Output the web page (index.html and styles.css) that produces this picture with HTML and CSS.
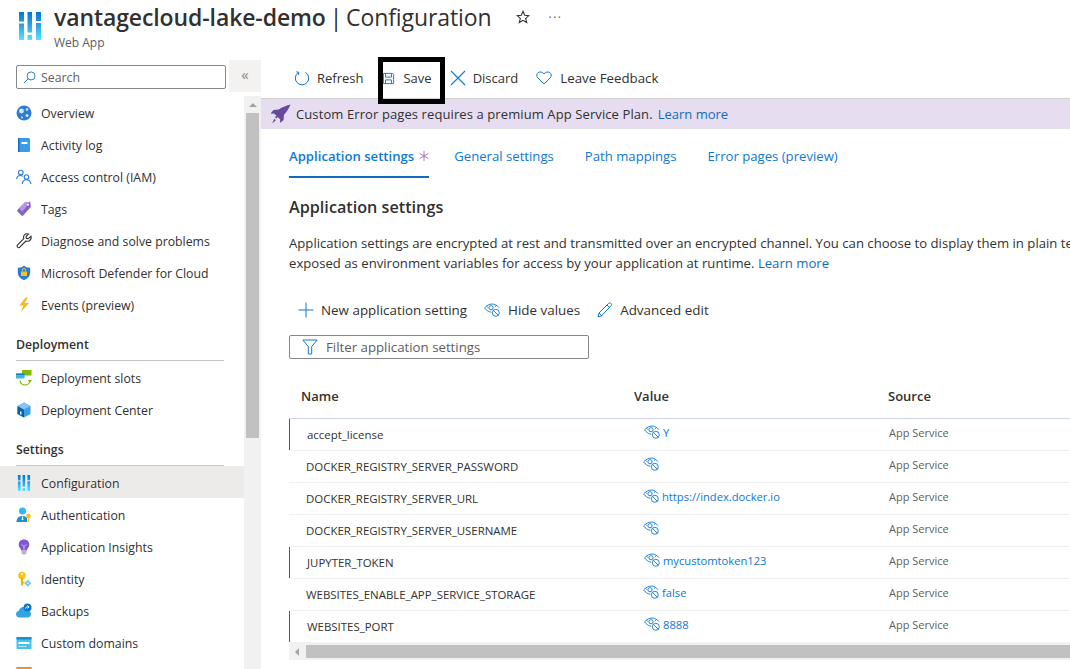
FILE: index.html
```html
<!DOCTYPE html>
<html>
<head>
  <meta http-equiv="Content-Type" content="text/html; charset=utf-8" />
  <title>vantagecloud-lake-demo | Configuration</title>
<link rel="stylesheet" href="styles.css">
</head>
<body>

<svg class="defs" width="0" height="0">
  <symbol id="sliders" viewBox="0 0 22 28">
    <defs>
      <linearGradient id="barfill" x1="0" y1="0" x2="0" y2="1">
        <stop offset="0" stop-color="#0078d4"/>
        <stop offset="0.45" stop-color="#2aa0e0"/>
        <stop offset="1" stop-color="#50e6ff"/>
      </linearGradient>
    </defs>
    <path fill="url(#barfill)" d="M0 0h5v9.500H0zM0 11.500h5V28H0zM8.500 0H13v20.500H8.500zM8.500 23H13v5H8.500zM17 0h5v9H17zM17 11h5v17h-5z"/>
  </symbol>
  <symbol id="eye" viewBox="0 0 16 14">
    <path fill="none" stroke="#0f78d4" stroke-width=".9" d="M.5 5C3 2.400 5.500 1 8 1s5 1.100 7 3.700M.5 5c2 2.500 4.300 3.900 6.800 4.200M2.800 3.300l1 1.300M12.200 2.400l-.8 1.300"/>
    <circle cx="7" cy="4.700" r="2.100" fill="none" stroke="#0f78d4" stroke-width=".9"/>
    <circle cx="11.800" cy="9.800" r="3.500" fill="#fff" stroke="#0f78d4" stroke-width=".9"/>
    <path stroke="#0f78d4" stroke-width=".9" d="M9.400 7.400l4.800 4.800"/>
  </symbol>
</svg>

<div class="page">

  <header class="blade-head">
    <svg class="logo"><use href="#sliders"/></svg>
    <div class="blade-titles">
      <div class="title-row">
        <h1 class="blade-title"><b>vantagecloud-lake-demo</b> | Configuration</h1>
        <svg class="star" viewBox="0 0 14 14"><path fill="none" stroke="#323130" stroke-width="1.100" d="M7 1.300l1.700 3.900 4.200.4-3.200 2.800 1 4.100L7 10.300l-3.700 2.200 1-4.100-3.200-2.800 4.200-.4z"/></svg>
        <span class="more">···</span>
      </div>
      <div class="blade-sub">Web App</div>
    </div>
  </header>

  <div class="blade-body">

    <aside class="sidebar">
      <div class="side-top">
        <div class="search">
          <svg class="search-ico" viewBox="0 0 14 14"><circle cx="8.700" cy="5.300" r="4.300" fill="none" stroke="#0f78d4"/><path stroke="#0f78d4" d="M5.500 8.500L1 13"/></svg>
          <span>Search</span>
        </div>
        <div class="collapse">«</div>
      </div>
      <div class="side-main">
        <nav class="nav">
          <a class="nav-item">
            <svg viewBox="0 0 16 16"><circle cx="8" cy="8" r="7.500" fill="#2b7cd3"/><circle cx="5.500" cy="6" r="2.400" fill="#cfe6f8"/><circle cx="11" cy="4.500" r="1.300" fill="#cfe6f8"/><circle cx="11" cy="10.500" r="1.500" fill="#cfe6f8"/><circle cx="6" cy="12.500" r="1" fill="#cfe6f8"/></svg>
            Overview</a>
          <a class="nav-item">
            <svg viewBox="0 0 16 16"><rect x="2" y="1" width="12" height="14" rx="1.500" fill="#3a9be6"/><rect x="2" y="1" width="1.500" height="14" fill="#1a6bb5"/><rect x="5.500" y="5" width="6" height="2" fill="#fff"/></svg>
            Activity log</a>
          <a class="nav-item">
            <svg viewBox="0 0 16 16" fill="none" stroke="#2b7cd3" stroke-width="1.100"><circle cx="4.800" cy="3.500" r="2.300"/><path d="M.6 10c.3-2.300 1.800-3.500 3.700-3.500 1 0 1.800.3 2.400.8"/><circle cx="10.500" cy="8" r="2.300"/><path d="M6.200 15c.2-2.700 2-4.300 4.300-4.300s4.100 1.600 4.400 4.300"/></svg>
            Access control (IAM)</a>
          <a class="nav-item">
            <svg viewBox="0 0 16 16"><path fill="#8661c5" d="M9 1.200l5.300-.4.500 5.300-7.600 8.300a1.200 1.200 0 0 1-1.700.1L1.500 10.400a1.200 1.200 0 0 1 0-1.700z"/><path fill="#b796e6" d="M9 1.200l5.300-.4-8 9.700-3-2.700z"/><circle cx="12" cy="3.700" r="1" fill="#fff"/></svg>
            Tags</a>
          <a class="nav-item">
            <svg viewBox="0 0 16 16"><path fill="none" stroke="#323130" stroke-width="1.100" d="M15 3.200l-2.700 2.500-1.900-.3-.4-1.900L12.600 1C10.500.2 8 1.200 7.600 3.500c-.1.800 0 1.500.2 2.100l-6.200 6.300c-.7.800-.6 1.600 0 2.300.6.600 1.500.7 2.200 0l6.100-6.200c.8.300 1.700.4 2.500.2 2-.5 3.200-2.700 2.600-5z"/></svg>
            Diagnose and solve problems</a>
          <a class="nav-item">
            <svg viewBox="0 0 16 16"><path fill="#2b7cd3" d="M8 .8c1.500 1.300 3.500 2 5.700 2 .3 0 .5.200.5.500v4.200c0 3.500-2.600 6.300-6.200 7.700-3.600-1.400-6.200-4.200-6.200-7.700V3.300c0-.3.200-.5.500-.5C4.500 2.800 6.500 2.100 8 .8z"/><rect x="5" y="6.500" width="6" height="4.500" rx=".5" fill="#f5c518"/><path fill="none" stroke="#f5c518" d="M6.300 6.500V5.200a1.700 1.700 0 0 1 3.400 0v1.300"/></svg>
            Microsoft Defender for Cloud</a>
          <a class="nav-item">
            <svg viewBox="0 0 16 16"><path fill="#fcb814" d="M9.500.5L3.500 8.500h4l-3 7 8.500-9.500H8.500l3.500-5.500z"/></svg>
            Events (preview)</a>

          <div class="nav-group first">Deployment</div>
          <a class="nav-item">
            <svg viewBox="0 0 16 16"><rect x="6" y="0" width="9.500" height="5.500" fill="#7fba00"/><rect x="0" y="3.500" width="8.500" height="5" fill="#3bb6e8"/><rect x="0" y="3.500" width="8.500" height="1.500" fill="#1a7fc4"/><path fill="none" stroke="#7fba00" stroke-width="1.200" d="M4 10.500c.6 3 2.800 4.500 5 4.500 2.500 0 4.300-1.500 4.800-4"/><path fill="#7fba00" d="M11.500 10h4.500l-2 2.500z"/></svg>
            Deployment slots</a>
          <a class="nav-item">
            <svg viewBox="0 0 16 16"><path fill="#3a9fe6" d="M8 .5l6.500 3.500v8L8 15.500 1.500 12V4z"/><path fill="#0e5ea8" d="M1.500 4L8 7.500v8L1.500 12z"/><path fill="#7ec8f5" d="M8 .5l6.500 3.500L8 7.500 1.500 4z"/><rect x="4" y="9.500" width="1.500" height="3" fill="#fff"/></svg>
            Deployment Center</a>

          <div class="nav-group">Settings</div>
          <a class="nav-item low active">
            <svg viewBox="0 0 22 28" class="cfg"><use href="#sliders"/></svg>
            Configuration</a>
          <a class="nav-item low">
            <svg viewBox="0 0 16 16"><circle cx="6.500" cy="4" r="3.500" fill="#2fb9e8"/><path fill="#1a8fd0" d="M.5 15c0-4 2.500-6 6-6 2 0 3.500.7 4.500 2v4z"/><path fill="#fff" d="M6 9.500h1l.3 3-.8 1-.8-1z"/><circle cx="12.500" cy="9" r="2.300" fill="#f5c518"/><rect x="11.800" y="10" width="1.400" height="5" fill="#f5c518"/></svg>
            Authentication</a>
          <a class="nav-item low">
            <svg viewBox="0 0 16 16"><path fill="#7e57d6" d="M8 .5c3.200 0 5.300 2.300 5.300 5 0 2-1 3-1.800 4.300-.4.600-.5 1.200-.5 1.700H5c0-.5-.1-1.100-.5-1.700C3.700 8.500 2.700 7.500 2.700 5.500c0-2.700 2.100-5 5.300-5z"/><path fill="#b8b6b4" d="M5.500 12h5v2l-1.200 1.500H6.700L5.500 14z"/><path fill="none" stroke="#e4d8f8" stroke-width=".8" d="M5.500 5.500l2.500 2 2.500-2M8 7.500v3.500"/></svg>
            Application Insights</a>
          <a class="nav-item low">
            <svg viewBox="0 0 16 16"><circle cx="6" cy="4.500" r="3.800" fill="#f5c518"/><rect x="4.900" y="7" width="2.200" height="7.500" fill="#e8b10c"/><rect x="7" y="11" width="1.500" height="1.300" fill="#e8b10c"/><circle cx="6" cy="3" r="1" fill="#fff"/><path fill="#7cc4ea" d="M11.800 8.800l3.500 3.500-3.500 3.500-3.500-3.500z"/><path fill="#fff" d="M11.800 11.300l1 1-1 1-1-1z"/></svg>
            Identity</a>
          <a class="nav-item low">
            <svg viewBox="0 0 16 16"><path fill="#2da6e0" d="M3.500 14.500C1.500 14.500 0 13.200 0 11.300c0-1.700 1.200-3 2.800-3.200C3.200 5.700 5 4 7.200 4c2 0 3.700 1.400 4.200 3.300 2 .1 3.600 1.500 3.600 3.600 0 2-1.500 3.600-3.600 3.600z"/><circle cx="11.500" cy="4.500" r="4" fill="#0f78d4"/><path fill="none" stroke="#fff" d="M9.500 5.500c.3-1.200 1.200-1.700 3-1.500M11.500 2.800L13 4l-1.500 1.300"/></svg>
            Backups</a>
          <a class="nav-item low">
            <svg viewBox="0 0 16 16"><rect x=".5" y="2" width="15" height="12" rx=".7" fill="#45c3ec"/><rect x=".5" y="2" width="15" height="2.500" fill="#1a8fd0"/><rect x="2.500" y="7" width="11" height="2" fill="#fff"/><rect x="2.500" y="11" width="8" height="1" fill="#b9e8f8"/></svg>
            Custom domains</a>
          <a class="nav-item low">
            <svg viewBox="0 0 16 16"><rect x=".5" y="0" width="15" height="12" fill="#f7b34f"/><rect x=".5" y="0" width="15" height="3" fill="#e8912c"/></svg>
          </a>
        </nav>
        <div class="side-scroll">
          <div class="scroll-arrow"></div>
          <div class="scroll-thumb"></div>
        </div>
      </div>
    </aside>

    <main class="content">
      <div class="cmdbar">
        <a class="cmd refresh">
          <svg viewBox="0 0 16 16" fill="none" stroke="#0f78d4" stroke-width="1"><path d="M11.500 2.400a6.700 6.700 0 1 1-7 0"/><path d="M2.300 1.800l2.500.5-.5 2.600"/></svg>
          Refresh</a>
        <a class="cmd save">
          <svg viewBox="0 0 14 14" fill="none" stroke="#0f78d4" stroke-width="1"><path d="M1.500 1.500h10l1 1v10h-11z"/><path d="M3.800 1.500v4h6.400v-4M3.800 12.500V8.500h6.400v4"/></svg>
          Save</a>
        <a class="cmd discard">
          <svg viewBox="0 0 16 16" stroke="#0f78d4" stroke-width="1.100"><path d="M1 1l14 14M15 1L1 15"/></svg>
          Discard</a>
        <a class="cmd feedback">
          <svg viewBox="0 0 16 14" fill="none" stroke="#0f78d4" stroke-width="1"><path d="M8 13L1.700 6.700C.2 5 .6 2.700 2.200 1.600 3.900.5 6.500.8 8 3c1.500-2.200 4.100-2.500 5.800-1.400 1.600 1.100 2 3.400.5 5.100z"/></svg>
          Leave Feedback</a>
      </div>

      <div class="banner">
        <svg viewBox="0 0 20 20"><path fill="#68489c" d="M19.500.5c-1.500 3.500-3.800 7.700-6.500 10.300l-.4 5.200-3.700 3 .3-3.600-2.400-2.400-1.500 1.400-1.200-1.200 1.300-1.500-2.300-2.300-3.600.3 3-3.700 5.200-.4C10.400 3.500 15 1.500 19.500.5z"/><path fill="#68489c" d="M3.400 14.800l1.500 1.500L1 19.500z"/></svg>
        <span>Custom Error pages requires a premium App Service Plan.</span>
        <a class="link">Learn more</a>
      </div>

      <div class="inner">
        <div class="tabs">
          <a class="tab active">Application settings<svg class="dirty" viewBox="0 0 10 10" stroke="#9b59b6" stroke-width=".8"><path d="M5 0v10M.7 2.500l8.600 5M.7 7.500l8.600-5"/></svg></a>
          <a class="tab">General settings</a>
          <a class="tab">Path mappings</a>
          <a class="tab">Error pages (preview)</a>
        </div>

        <h2 class="section-title">Application settings</h2>
        <p class="section-text">Application settings are encrypted at rest and transmitted over an encrypted channel. You can choose to display them in plain text<br>exposed as environment variables for access by your application at runtime. <a class="link">Learn more</a></p>

        <div class="actions">
          <a class="action">
            <svg class="plus" viewBox="0 0 16 16" stroke="#0f78d4"><path d="M8 .5v15M.5 8h15"/></svg>
            New application setting</a>
          <a class="action">
            <svg class="eye" viewBox="0 0 16 14"><use href="#eye"/></svg>
            Hide values</a>
          <a class="action">
            <svg class="pen" viewBox="0 0 16 16" fill="none" stroke="#0f78d4"><path d="M1 15l1-4L11.500 1.500c.8-.8 1.800-.8 2.500-.1s.7 1.700-.1 2.500L4.500 13.800zM2 11l3 3M10 3l3 3"/></svg>
            Advanced edit</a>
        </div>

        <div class="filter">
          <svg viewBox="0 0 16 16" fill="none" stroke="#0f78d4"><path d="M.8 1h14.400L9.700 7.500v7.500H6.300V7.500z"/></svg>
          <span>Filter application settings</span>
        </div>

        <div class="grid-head">
          <div>Name</div>
          <div>Value</div>
          <div>Source</div>
        </div>

        <div class="row changed">
          <div class="cell-name">accept_license</div>
          <div class="cell-value"><svg class="eye"><use href="#eye"/></svg>Y</div>
          <div class="cell-source">App Service</div>
        </div>
        <div class="row">
          <div class="cell-name">DOCKER_REGISTRY_SERVER_PASSWORD</div>
          <div class="cell-value"><svg class="eye"><use href="#eye"/></svg></div>
          <div class="cell-source">App Service</div>
        </div>
        <div class="row">
          <div class="cell-name">DOCKER_REGISTRY_SERVER_URL</div>
          <div class="cell-value"><svg class="eye"><use href="#eye"/></svg>https://index.docker.io</div>
          <div class="cell-source">App Service</div>
        </div>
        <div class="row">
          <div class="cell-name">DOCKER_REGISTRY_SERVER_USERNAME</div>
          <div class="cell-value"><svg class="eye"><use href="#eye"/></svg></div>
          <div class="cell-source">App Service</div>
        </div>
        <div class="row changed">
          <div class="cell-name">JUPYTER_TOKEN</div>
          <div class="cell-value"><svg class="eye"><use href="#eye"/></svg>mycustomtoken123</div>
          <div class="cell-source">App Service</div>
        </div>
        <div class="row">
          <div class="cell-name">WEBSITES_ENABLE_APP_SERVICE_STORAGE</div>
          <div class="cell-value"><svg class="eye"><use href="#eye"/></svg>false</div>
          <div class="cell-source">App Service</div>
        </div>
        <div class="row changed">
          <div class="cell-name">WEBSITES_PORT</div>
          <div class="cell-value"><svg class="eye"><use href="#eye"/></svg>8888</div>
          <div class="cell-source">App Service</div>
        </div>

        <div class="hscroll">
          <div class="hscroll-arrow"></div>
          <div class="hscroll-thumb"></div>
        </div>
      </div>
    </main>
  </div>
</div>

<div class="marker"></div>

</body>
</html>
```

FILE: styles.css
```css
html, body {
  margin: 0;
  padding: 0;
  background: #fff;
}
body {
  width: 1070px;
  height: 669px;
  overflow: hidden;
  font-family: "Open Sans", "Noto Sans", sans-serif;
  font-size: 12.300px;
  color: #323130;
  position: relative;
}
.defs {
  position: absolute;
}
.page {
  display: flex;
  flex-direction: column;
  height: 669px;
  overflow: hidden;
}

/* blade header */
.blade-head {
  display: flex;
  height: 60px;
  flex: none;
  padding: 12px 0 0 19px;
  box-sizing: border-box;
}
.logo {
  width: 22px;
  height: 28px;
  margin-right: 13px;
}
.blade-titles {
  margin-top: -12px;
}
.title-row {
  display: flex;
  align-items: center;
  height: 34px;
}
.blade-title {
  margin: 0;
  font-size: 23px;
  font-weight: 400;
  white-space: nowrap;
  letter-spacing: -0.1px;
  word-spacing: -2px;
}
.blade-title b {
  font-weight: 600;
}
.star {
  width: 14px;
  height: 14px;
  margin-left: 24px;
}
.more {
  margin-left: 19px;
  font-size: 12px;
  letter-spacing: 1.500px;
  color: #605e5c;
}
.blade-sub {
  font-size: 12px;
  color: #605e5c;
}

.blade-body {
  display: flex;
  flex: 1;
  min-height: 0;
}

/* left menu */
.sidebar {
  width: 261px;
  flex: none;
  display: flex;
  flex-direction: column;
}
.side-top {
  display: flex;
  height: 37px;
  flex: none;
}
.search {
  width: 210px;
  height: 24px;
  margin: 5px 3px 0 16px;
  border: 1px solid #8a8886;
  border-radius: 2px;
  display: flex;
  align-items: center;
  box-sizing: border-box;
  color: #605e5c;
}
.search-ico {
  width: 13px;
  height: 13px;
  margin: 0 5px 0 6px;
}
.collapse {
  width: 32px;
  height: 32px;
  background: #f3f2f1;
  text-align: center;
  line-height: 29px;
  font-size: 15px;
  color: #8a8886;
}
.side-main {
  display: flex;
  flex: 1;
  min-height: 0;
}
.nav {
  width: 244px;
  flex: none;
}
.nav-item {
  display: flex;
  align-items: center;
  height: 32px;
  padding-left: 16px;
  white-space: nowrap;
  box-sizing: border-box;
}
.nav-item.low {
  padding-top: 2px;
}
.nav-item svg {
  width: 16px;
  height: 16px;
  margin-right: 9px;
  flex: none;
}
.nav-item.active {
  background: #edebe9;
}
.nav-group {
  margin: 7px 20px 0 16px;
  height: 32px;
  line-height: 33px;
  border-bottom: 1px solid #c8c6c4;
  font-weight: 600;
}
.nav-group.first {
  margin-bottom: 1px;
}
.side-scroll {
  width: 17px;
  margin-top: -1px;
  background: #f1f1f1;
}
.scroll-arrow {
  height: 17px;
  position: relative;
}
.scroll-arrow::after {
  content: "";
  position: absolute;
  left: 5px;
  top: 7px;
  border-left: 4px solid transparent;
  border-right: 4px solid transparent;
  border-bottom: 4px solid #a3a3a3;
}
.scroll-thumb {
  width: 13px;
  height: 325px;
  margin-left: 2px;
  background: #c1c1c1;
}

/* right side */
.content {
  flex: 1;
  min-width: 0;
  display: flex;
  flex-direction: column;
}
.cmdbar {
  display: flex;
  align-items: center;
  height: 39px;
  flex: none;
  padding: 0 0 2px 33px;
  box-sizing: border-box;
  border-bottom: 1px solid #d2d0ce;
}
.cmd {
  display: flex;
  align-items: center;
  white-space: nowrap;
  font-size: 13px;
}
.cmd svg {
  width: 16px;
  height: 16px;
  margin-right: 7px;
}
.refresh {
  margin-right: 19px;
}
.save {
  margin-right: 18px;
}
.save svg {
  width: 13px;
  height: 13px;
  margin-right: 8px;
}
.discard {
  margin-right: 18px;
}
.cmd.feedback {
  font-size: 13.300px;
}
.cmd.feedback svg {
  margin-right: 8px;
}
.banner {
  display: flex;
  align-items: center;
  height: 30px;
  flex: none;
  background: #e6ddf1;
  padding-left: 10px;
  white-space: nowrap;
  font-size: 13px;
}
.banner span {
  letter-spacing: 0.1px;
}
.banner svg {
  width: 20px;
  height: 20px;
  margin-right: 5px;
}
.link {
  color: #0f6cbd;
}
.banner .link {
  margin-left: 5px;
}

.inner {
  padding-left: 28px;
  flex: 1;
  min-width: 0;
}
.tabs {
  display: flex;
  height: 49px;
  padding-top: 18px;
  box-sizing: border-box;
}
.tab {
  color: #0f78d4;
  margin-right: 31px;
  font-size: 13.150px;
  white-space: nowrap;
  height: 31px;
  box-sizing: border-box;
}
.tab.active {
  font-weight: 600;
  border-bottom: 2px solid #0f6cbd;
  margin-right: 25px;
}
.dirty {
  width: 10px;
  height: 10px;
  margin-left: 5px;
}
.section-title {
  margin: 17px 0 0;
  height: 24px;
  font-size: 16.200px;
  line-height: 24px;
  font-weight: 600;
}
.section-text {
  margin: 14px 0 0;
  line-height: 20px;
  font-size: 13.150px;
  white-space: nowrap;
  overflow: hidden;
}
.actions {
  display: flex;
  align-items: center;
  height: 32px;
  margin-top: 21px;
  padding-left: 9px;
}
.action {
  display: flex;
  align-items: center;
  white-space: nowrap;
  font-size: 13.400px;
  margin-right: 17px;
}
.action svg {
  margin-right: 7px;
}
.plus {
  width: 16px;
  height: 16px;
}
.action svg.eye {
  width: 16px;
  height: 14px;
  margin-right: 8px;
}
.pen {
  width: 16px;
  height: 16px;
}
.filter {
  width: 300px;
  height: 24px;
  margin-top: 9px;
  border: 1px solid #8a8886;
  border-radius: 2px;
  box-sizing: border-box;
  display: flex;
  align-items: center;
  color: #605e5c;
  padding-left: 12px;
  font-size: 13.250px;
}
.filter svg {
  width: 16px;
  height: 16px;
  margin-right: 8px;
}
.grid-head {
  display: grid;
  grid-template-columns: 333px 254px 1fr;
  height: 36px;
  margin-top: 23px;
  padding-left: 12px;
  border-bottom: 1px solid #cfd4e4;
  font-weight: 600;
  font-size: 13px;
  line-height: 28px;
}
.row {
  display: grid;
  grid-template-columns: 337px 246px 1fr;
  height: 32px;
  padding-left: 17px;
  border-bottom: 1px solid #f0f0f0;
  box-sizing: border-box;
  white-space: nowrap;
  font-size: 11.450px;
}
.row.changed {
  box-shadow: inset 1px 0 0 #8a2d9c;
  padding-left: 18px;
}
.cell-name {
  line-height: 32px;
}
.cell-value {
  display: flex;
  align-items: flex-start;
  padding-top: 6px;
  line-height: 16px;
  font-size: 11.200px;
  color: #0f78d4;
}
.cell-value svg.eye {
  width: 16px;
  height: 14px;
  margin-right: 3px;
  flex: none;
}
.cell-source {
  padding-top: 6px;
  line-height: 16px;
  color: #605e5c;
  font-size: 11px;
}
.row.changed .cell-source {
  margin-left: -1px;
}
.hscroll {
  display: flex;
  align-items: flex-start;
  height: 18px;
  margin-top: -1px;
  position: relative;
  background: #f1f1f1;
}
.hscroll-arrow {
  width: 17px;
  position: relative;
  height: 18px;
}
.hscroll-arrow::after {
  content: "";
  position: absolute;
  left: 6px;
  top: 6px;
  border-top: 4px solid transparent;
  border-bottom: 4px solid transparent;
  border-right: 4px solid #a3a3a3;
}
.hscroll-thumb {
  flex: 1;
  height: 13px;
  margin-top: 3px;
  background: #c1c1c1;
}

/* black rectangle somebody drew over the screenshot */
.marker {
  position: absolute;
  left: 378px;
  top: 57px;
  width: 67px;
  height: 47px;
  border: 5px solid #000;
  box-sizing: border-box;
}
```
